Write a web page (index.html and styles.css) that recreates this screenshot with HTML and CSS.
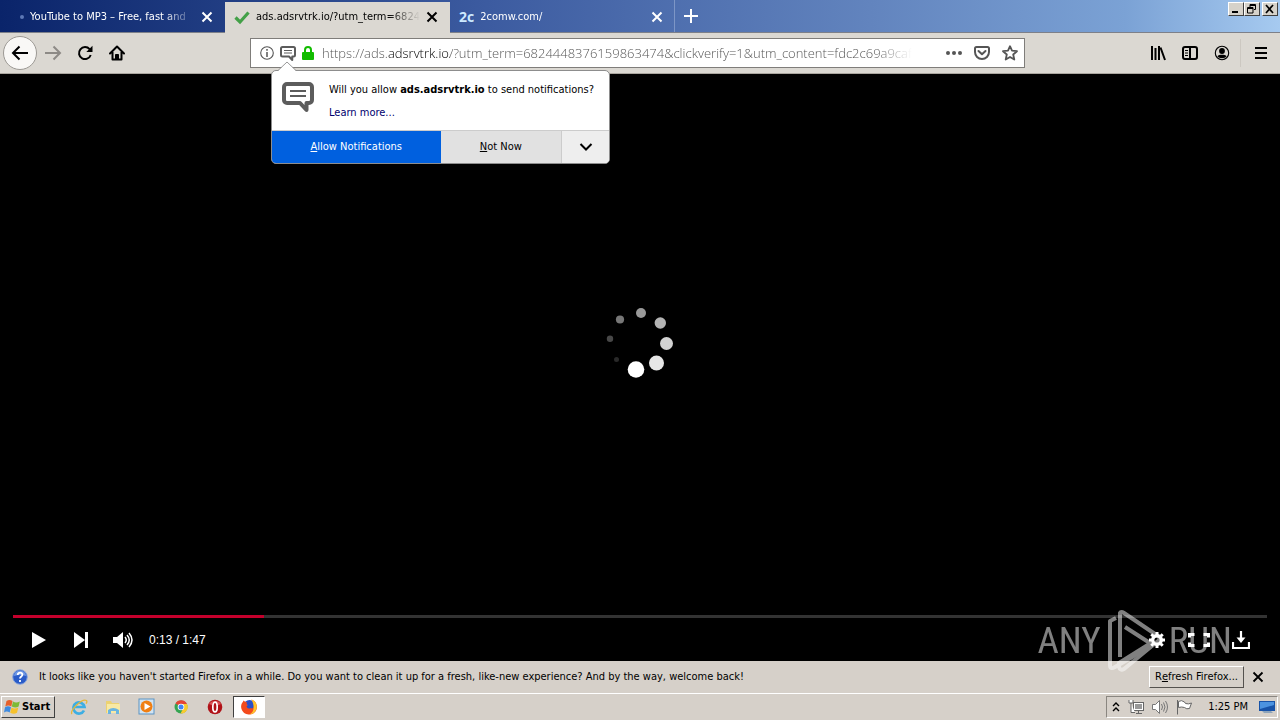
FILE: index.html
```html
<!DOCTYPE html>
<html lang="en">
<head>
<meta charset="utf-8">
<title>ads.adsrvtrk.io</title>
<link rel="stylesheet" href="styles.css">
</head>
<body>
<header class="titlebar">
  <nav class="tabs" aria-label="Tabs">
    <div class="tab tab-first">
      <span class="tab-dot"></span>
      <span class="tab-title">YouTube to MP3 – Free, fast and</span>
      <button class="tab-close" aria-label="Close tab"><svg width="12" height="12" viewBox="0 0 12 12"><path d="M1.500 1.500 10.500 10.500M10.500 1.500 1.500 10.500"/></svg></button>
    </div>
    <div class="tab tab-active">
      <svg class="favicon" width="16" height="16" viewBox="0 0 16 16"><path d="M1.500 8.500 6 13 14.500 3.500" fill="none" stroke="#43a047" stroke-width="3.200"/></svg>
      <span class="tab-title">ads.adsrvtrk.io/?utm_term=6824</span>
      <button class="tab-close" aria-label="Close tab"><svg width="12" height="12" viewBox="0 0 12 12"><path d="M1.500 1.500 10.500 10.500M10.500 1.500 1.500 10.500"/></svg></button>
    </div>
    <div class="tab tab-last">
      <span class="favicon-text">2c</span>
      <span class="tab-title">2comw.com/</span>
      <button class="tab-close" aria-label="Close tab"><svg width="12" height="12" viewBox="0 0 12 12"><path d="M1.500 1.500 10.500 10.500M10.500 1.500 1.500 10.500"/></svg></button>
    </div>
    <button class="new-tab" aria-label="New tab"><svg width="16" height="16" viewBox="0 0 16 16"><path d="M8 1v14M1 8h14" stroke="#fff" stroke-width="2"/></svg></button>
  </nav>
  <div class="window-buttons">
    <button class="win-btn" aria-label="Minimize"><svg width="12" height="10" viewBox="0 0 12 10"><path d="M2 8h6" stroke="#000" stroke-width="2"/></svg></button>
    <button class="win-btn" aria-label="Restore"><svg width="12" height="10" viewBox="0 0 12 10" fill="none" stroke="#000"><path d="M4 3V.5h5.500v5H8M4 1.500h5.500M1.500 3.500h5.500v5.500H1.500zM1.500 4.500h5.500"/></svg></button>
    <button class="win-btn win-close" aria-label="Close"><svg width="12" height="10" viewBox="0 0 12 10"><path d="M2 1l7 8M9 1 2 9" stroke="#000" stroke-width="1.700"/></svg></button>
  </div>
</header>

<div class="toolbar">
  <div class="nav-buttons">
    <button class="nav-btn nav-back" aria-label="Back"><svg width="18" height="16" viewBox="0 0 18 16"><path d="M17 8H2M8.500 1.500 2 8l6.500 6.500"/></svg></button>
    <button class="nav-btn nav-forward" aria-label="Forward"><svg width="18" height="16" viewBox="0 0 18 16"><path d="M1 8h15M9.500 1.500 16 8l-6.500 6.500"/></svg></button>
    <button class="nav-btn" aria-label="Reload"><svg width="16" height="16" viewBox="0 0 16 16"><path d="M12.600 4.200A6 6 0 1 0 13.700 10"/><path d="M15.500.800V7H9.300z" fill="#000" stroke="none"/></svg></button>
    <button class="nav-btn" aria-label="Home"><svg width="16" height="16" viewBox="0 0 16 16"><path d="M1 8.500 8 1.500l7 7M3.500 7v7.500h9V7" stroke-linejoin="round" stroke-linecap="round"/><path d="M6.500 15V9.500h3V15" fill="#000" stroke-width="1"/></svg></button>
  </div>
  <div class="urlbar">
    <div class="identity">
      <svg width="14" height="14" viewBox="0 0 14 14" fill="none" stroke="#555"><circle cx="7" cy="7" r="6.300" stroke-width="1.100"/><path d="M7 6v5M7 3v1.700" stroke-width="1.500"/></svg>
      <svg width="16" height="15" viewBox="0 0 32 30"><use href="#bubble"/></svg>
      <svg width="12" height="14" viewBox="0 0 12 14"><path d="M3 7V4a3 3 0 0 1 6 0v3" fill="none" stroke="#12bc00" stroke-width="2"/><rect y="6" width="12" height="8" rx="1" fill="#12bc00"/></svg>
    </div>
    <input class="url" type="text" aria-label="Address" value="https://ads.adsrvtrk.io/?utm_term=6824448376159863474&amp;clickverify=1&amp;utm_content=fdc2c69a9cafa">
    <div class="page-actions">
      <button class="icon-btn" aria-label="Page actions"><svg width="16" height="16" viewBox="0 0 16 16" fill="#555"><circle cx="2" cy="8" r="2"/><circle cx="8" cy="8" r="2"/><circle cx="14" cy="8" r="2"/></svg></button>
      <button class="icon-btn" aria-label="Save to Pocket"><svg width="16" height="16" viewBox="0 0 16 16" fill="none" stroke="#555" stroke-width="2"><path d="M2.500 2h11A1.500 1.500 0 0 1 15 3.500V7A7 7 0 0 1 1 7V3.500A1.500 1.500 0 0 1 2.500 2z"/><path d="M4.500 6 8 9.300 11.500 6" stroke-linecap="round" stroke-linejoin="round"/></svg></button>
      <button class="icon-btn" aria-label="Bookmark"><svg width="16" height="16" viewBox="0 0 16 16" fill="none" stroke="#555" stroke-width="1.800" stroke-linejoin="round"><path d="M8 1.200l2 4.500 5 .5-3.800 3.300 1.100 5L8 11.900l-4.300 2.600 1.100-5L1 6.200l5-.5z"/></svg></button>
    </div>
    <section class="popup" aria-label="Notification permission">
      <svg class="popup-arrow" width="18" height="10" viewBox="0 0 18 10"><path d="M0 10 9 1l9 9z" fill="#fff"/><path d="M0 9.500 9 1l9 8.500" fill="none" stroke="#999"/></svg>
      <div class="popup-body">
        <svg class="popup-icon" width="32" height="30" viewBox="0 0 32 30"><g id="bubble"><path d="M5 2h22a3 3 0 0 1 3 3v13a3 3 0 0 1-3 3h-2.500v7L18 21H5a3 3 0 0 1-3-3V5a3 3 0 0 1 3-3z" fill="#fff" stroke="#5c5c5c" stroke-width="4" stroke-linejoin="round"/><path d="M8 9h16M8 14h16" stroke="#5c5c5c" stroke-width="2"/></g></svg>
        <div class="popup-text">
          <p>Will you allow <b>ads.adsrvtrk.io</b> to send notifications?</p>
          <a href="#">Learn more...</a>
        </div>
      </div>
      <div class="popup-actions">
        <button class="allow"><u>A</u>llow Notifications</button>
        <button class="not-now"><u>N</u>ot Now</button>
        <button class="more" aria-label="More options"><svg width="14" height="10" viewBox="0 0 14 10"><path d="M1.500 2 7 7.500 12.500 2" fill="none" stroke="#000" stroke-width="2"/></svg></button>
      </div>
    </section>
  </div>
  <div class="tool-buttons">
    <button class="icon-btn" aria-label="Library"><svg width="16" height="16" viewBox="0 0 16 16" stroke="#000" stroke-width="2"><path d="M2 1v14M5.500 3v12M9 1v14M10.500 2.500 15 15"/></svg></button>
    <button class="icon-btn" aria-label="Sidebars"><svg width="16" height="16" viewBox="0 0 16 16" fill="none" stroke="#000" stroke-width="2"><rect x="1" y="2" width="14" height="12" rx="2"/><path d="M8 2v12"/><path d="M3 5.500h3M3 8h3M3 10.500h3" stroke-width="1"/></svg></button>
    <button class="icon-btn" aria-label="Account"><svg width="16" height="16" viewBox="0 0 16 16"><circle cx="8" cy="8" r="6.700" fill="none" stroke="#000" stroke-width="1.100"/><circle cx="8" cy="6" r="2.900"/><path d="M3.400 11.200C5 9.300 11 9.300 12.600 11.200 11 13.800 5 13.800 3.400 11.200z"/></svg></button>
    <button class="icon-btn menu-btn" aria-label="Menu"><svg width="14" height="14" viewBox="0 0 14 14" stroke="#000" stroke-width="2"><path d="M1 2h12M1 7h12M1 12h12"/></svg></button>
  </div>
</div>

<main class="player">
  <div class="stage">
    <svg width="80" height="81" viewBox="600 304 80 81" role="img" aria-label="Loading">
      <circle cx="636" cy="369.500" r="8.300" fill="#fff"/><circle cx="656.500" cy="363" r="7.500" fill="#e6e6e6"/><circle cx="666.500" cy="343.500" r="6.500" fill="#d2d2d2"/><circle cx="660.300" cy="323" r="5.700" fill="#b4b4b4"/><circle cx="641" cy="313" r="5" fill="#999"/><circle cx="620" cy="319.500" r="4.100" fill="#777"/><circle cx="610" cy="338.700" r="3.200" fill="#484848"/><circle cx="616.500" cy="359.500" r="2.500" fill="#292929"/>
    </svg>
  </div>
  <div class="controls">
    <div class="progress"><div class="progress-done" style="width:20%"></div></div>
    <div class="control-row">
      <button class="icon-btn" aria-label="Play"><svg width="16" height="16" viewBox="0 0 16 16"><path d="M1 0 15 8 1 16z" fill="#fff"/></svg></button>
      <button class="icon-btn" aria-label="Next"><svg width="16" height="16" viewBox="0 0 16 16"><path d="M1 0 12 8 1 16zM12 0h3v16h-3z" fill="#fff"/></svg></button>
      <button class="icon-btn" aria-label="Mute"><svg width="20" height="16" viewBox="0 0 20 16"><path d="M0 5h4l6-5v16l-6-5H0z" fill="#fff"/><path d="M12 5q2.500 3 0 6M14 3q4.500 5 0 10M16 1q6 7 0 14" fill="none" stroke="#fff" stroke-width="1.500"/></svg></button>
      <span class="time">0:13 / 1:47</span>
      <button class="icon-btn settings" aria-label="Settings"><svg width="16" height="16" viewBox="0 0 16 16"><circle cx="8" cy="8" r="4.300" fill="none" stroke="#fff" stroke-width="3.400"/><path d="M8 0v3M8 13v3M0 8h3M13 8h3M2.300 2.300l2 2M11.700 11.700l2 2M13.700 2.300l-2 2M4.300 11.700l-2 2" stroke="#fff" stroke-width="3"/></svg></button>
      <button class="icon-btn" aria-label="Full screen"><svg width="22" height="16" viewBox="0 0 22 16" fill="none" stroke="#fff" stroke-width="3"><path d="M1.500 5.500v-3h5M15.500 2.500h5v3M20.500 10.500v3h-5M6.500 13.500h-5v-3"/></svg></button>
      <button class="icon-btn" aria-label="Download"><svg width="18" height="18" viewBox="0 0 18 18"><path d="M9 0v9M1 11v6h16v-6" fill="none" stroke="#fff" stroke-width="2.200"/><path d="M4.500 6.500h9L9 12z" fill="#fff"/></svg></button>
    </div>
  </div>
  <div class="watermark">
    <span>ANY</span>
    <svg width="56" height="64" viewBox="0 0 56 64" fill="none" stroke="#fff" stroke-width="4" stroke-linejoin="round"><path d="M9 9 3 12v44q0 5 5 2l38-22"/><path d="M13 48V4q1-2 4 0l34 23q3 3 0 5L17 60q-4 2-5-2v-4l32-20M18 18l28 18"/></svg>
    <span>RUN</span>
  </div>
</main>

<aside class="notice">
  <svg width="16" height="16" viewBox="0 0 16 16"><circle cx="8" cy="8" r="7.300" fill="#2a5bc8" stroke="#8ba7dc"/><path d="M2 7a6 5.500 0 0 1 12 0q-6-2-12 0z" fill="#6f98e4"/><path d="M5.700 6.100c0-3.300 5-3.100 4.700-.2C10.200 7.500 8 7.500 8 9.500M8 11v2" fill="none" stroke="#fff" stroke-width="1.800"/></svg>
  <p class="notice-text">It looks like you haven't started Firefox in a while. Do you want to clean it up for a fresh, like-new experience? And by the way, welcome back!</p>
  <button class="refresh">R<u>e</u>fresh Firefox...</button>
  <button class="icon-btn" aria-label="Close notice"><svg width="12" height="12" viewBox="0 0 12 12"><path d="M1.500 1.500l9 9M10.500 1.500l-9 9" stroke="#000" stroke-width="1.800"/></svg></button>
</aside>

<footer class="taskbar">
  <button class="start"><svg width="16" height="16" viewBox="0 0 16 16"><path d="M2.500 2q3-2 6 0L7.300 7.500q-3-1.800-6 0z" fill="#e7602a"/><path d="M9 2.500q3 2 6.800 0l-1.200 5q-3 2-6.800 0z" fill="#7dba35"/><path d="M1 8.200q3-2 6 0L5.700 13.500q-3-1.800-5.700 0z" fill="#3f8be0"/><path d="M7.500 8.500q3 2 6.800 0L13 13.800q-3 2-6.800 0z" fill="#f6c12c"/></svg>Start</button>
  <div class="launchers">
    <button class="launch" aria-label="Internet Explorer"><svg width="18" height="18" viewBox="0 0 18 18" fill="none"><path d="M14 12.500a5.600 5.600 0 1 1 .5-3.500H5" stroke="#3daee3" stroke-width="2.700"/><path d="M2 16C-1 13 12 0 16.500 2.500c.8.800.3 2-.5 3.200" stroke="#e5b73a" stroke-width="1.300"/></svg></button>
    <button class="launch" aria-label="Explorer"><svg width="18" height="18" viewBox="0 0 18 18"><path d="M2 3h5l1 2h7v10H2z" fill="#ecd272"/><path d="M3 6h13v9H3z" fill="#f8e9a4"/><path d="M4 16v-4q5-4 11 0v4h-3v-3H7v3z" fill="#6bb5e0"/></svg></button>
    <button class="launch" aria-label="Media Player"><svg width="18" height="18" viewBox="0 0 18 18"><rect x="1" y="1" width="15" height="15" fill="#d2e4f2" stroke="#5a93c4"/><circle cx="8.500" cy="8.500" r="6" fill="#f07f13"/><path d="M6.500 5v7l6-3.500z" fill="#fff"/></svg></button>
    <button class="launch" aria-label="Chrome"><svg width="18" height="18" viewBox="0 0 18 18"><circle cx="9" cy="9" r="6.500" fill="#35a451"/><path d="M9 9 3.500 5.500A6.500 6.500 0 0 1 15 6H9z" fill="#e64435"/><path d="M15 6A6.500 6.500 0 0 1 8.500 15.500L12 9 9 6z" fill="#f9cb2e"/><circle cx="9" cy="9" r="3.300" fill="#fff"/><circle cx="9" cy="9" r="2.500" fill="#4285f4"/></svg></button>
    <button class="launch" aria-label="Opera"><svg width="18" height="18" viewBox="0 0 18 18"><circle cx="9" cy="9" r="7.300" fill="#b01218"/><path d="M3 6a6.500 5 0 0 1 12 0q-6 3-12 0z" fill="#da5256"/><ellipse cx="9" cy="9" rx="2.200" ry="4.900" fill="#b01218" stroke="#fff" stroke-width="1.700"/></svg></button>
    <button class="launch launch-active" aria-label="Firefox"><svg width="18" height="18" viewBox="0 0 18 18"><circle cx="9.500" cy="8" r="6" fill="#2a50c8"/><path d="M2 5q1-1 1.500-2.500Q5 4 7 4.300 6 6 7.800 7L6.500 8.500q1 3 4.500 1.500 1 0 1 .8c3-2 2-6-.5-9.300C16 3 18 8 16.300 12A8 8 0 0 1 1.500 11Q.5 8 2 5z" fill="#f34a1d"/><path d="M11.500 1.500C16 3 18 8 16 12q-2 4-6.500 4.500c4-2 6-7 2-15z" fill="#ffc62b"/></svg></button>
  </div>
  <div class="tray">
    <svg width="8" height="12" viewBox="0 0 8 12" fill="none" stroke="#000" stroke-width="1.400"><path d="M1 5l3-3 3 3M1 10l3-3 3 3"/></svg>
    <svg width="16" height="16" viewBox="0 0 16 16" fill="#fff" stroke="#666"><rect x="5.500" y="3.500" width="10" height="8"/><path d="M7 5h7v5H7z" fill="#999" stroke="none"/><path d="M8 14.500h6M10.500 12v2M1 1v3h4V1M3 4v9.500h4"/></svg>
    <svg width="16" height="16" viewBox="0 0 16 16" fill="#fff" stroke="#777"><path d="M.500 5.500h3l4-4v13l-4-4h-3z"/><path d="M9.500 5q2 3 0 6M11.500 3.500q3 4.500 0 9M13.500 2q4 6 0 12" fill="none"/></svg>
    <svg width="16" height="16" viewBox="0 0 16 16" fill="#fff" stroke="#666"><path d="M2.500 2.500q3-2 6 .5l1 1.500q3 1 6-.5l-2 5.500q-3 1-5-1-3-1-6 0zM1.500 1v14.500"/></svg>
    <span class="clock">1:25 PM</span>
    <svg width="16" height="14" viewBox="0 0 16 14"><path d="M0 1h16v10H0z" fill="#1853a8"/><path d="M1 2h14v3L1 9z" fill="#4c93e0"/><path d="M3 11h9l2 2H5z" fill="#8ea4ba"/></svg>
  </div>
</footer>
</body>
</html>
```
FILE: styles.css
```css
* { box-sizing: border-box; }

body {
  margin: 0;
  min-height: 100vh;
  display: flex;
  flex-direction: column;
  background: #000;
  color: #000;
  font: 11px/16px Tahoma, "DejaVu Sans Condensed", "Noto Sans", sans-serif;
}

button {
  display: flex;
  align-items: center;
  justify-content: center;
  border: 0;
  padding: 0;
  background: none;
  color: inherit;
  font: inherit;
}

p { margin: 0; }
svg { flex: none; }

/* Title bar */
.titlebar {
  display: flex;
  justify-content: space-between;
  height: 33px;
  border-bottom: 1px solid #7d8089;
  background: linear-gradient(to right, #0a246a, #3c5ba0 38%, #6284be 68%, #7ba2d5 88%, #a6caf0);
}
.tabs { display: flex; flex: 1; min-width: 0; }
.tab {
  display: flex;
  align-items: center;
  gap: 6px;
  flex: 0 1 225px;
  min-width: 0;
  padding: 2px 12px 0 9px;
  color: #fff;
  stroke: #fff;
}
.tab-first { padding-left: 20px; }
.tab-dot { width: 4px; height: 4px; border-radius: 50%; background: #5d78b5; }
.tab-active {
  height: 33px;
  margin-top: 2px;
  padding-top: 0;
  padding-bottom: 3px;
  background: #dbd8d2;
  color: #000;
  stroke: #000;
}
.tab-last { padding-right: 11px; border-right: 1px solid #7d96c6; }
.tab-title {
  flex: 1;
  overflow: hidden;
  white-space: nowrap;
  mask-image: linear-gradient(to left, transparent, #000 32px);
}
.tab-close { width: 12px; height: 16px; stroke: inherit; stroke-width: 2px; }
.favicon-text { font: bold 14px/16px "Open Sans", sans-serif; color: #cdeaff; }
.new-tab { width: 32px; }
.window-buttons { display: flex; padding: 2px 2px 0 0; }
.win-btn {
  width: 16px;
  height: 14px;
  background: #d6d2ca;
  border: 1px solid;
  border-color: #fff #404040 #404040 #fff;
}
.win-close { margin-left: 2px; }

/* Navigation toolbar */
.toolbar {
  display: grid;
  grid-template-columns: 250fr 775fr 255fr;
  align-items: center;
  height: 41px;
  border-bottom: 1px solid #aaa69f;
  background: #dbd8d2;
}
.nav-buttons { display: flex; align-items: center; padding-left: 3px; }
.nav-btn { width: 32px; height: 32px; }
.nav-btn svg { fill: none; stroke: #000; stroke-width: 2px; }
.nav-back {
  width: 34px;
  height: 34px;
  border: 1px solid #9c9994;
  border-radius: 50%;
  background: #f9f8f6;
}
.nav-btn.nav-forward svg { stroke: #8d8a86; }
.urlbar {
  position: relative;
  display: flex;
  align-items: center;
  height: 30px;
  border: 1px solid #7f7d7a;
  background: #fff;
}
.identity { display: flex; align-items: center; gap: 6px; padding: 0 5px 0 9px; }
.url {
  flex: 1;
  min-width: 0;
  height: 26px;
  border: 0;
  outline: 0;
  padding: 0 0 0 3px;
  background: linear-gradient(to right, #505050 69px, #000 69px, #000 131px, #505050 131px, #505050 calc(100% - 36px), transparent);
  -webkit-background-clip: text;
  background-clip: text;
  color: transparent;
  font: 300 13px/20px "Open Sans", "Noto Sans", sans-serif;
}
.page-actions { display: flex; padding: 0 0 0 28px; }
.icon-btn { width: 28px; height: 28px; }
.tool-buttons { display: flex; justify-content: flex-end; gap: 4px; padding-right: 4px; }
.menu-btn { width: 36px; padding-left: 4px; border-left: 1px solid #ccc8c1; }

/* Permission popup, hanging from the address bar */
.popup {
  position: absolute;
  z-index: 2;
  top: 31px;
  left: 20px;
  width: 339px;
  border: 1px solid #8d8d8d;
  border-radius: 5px;
  background: #fff;
}
.popup-arrow { position: absolute; top: -10px; left: 6px; }
.popup-body { display: flex; gap: 15px; padding: 11px 10px 10px; height: 59px; }
.popup-text { display: grid; align-content: start; gap: 7px; white-space: nowrap; }
.popup-text a { color: #00006e; text-decoration: none; }
.popup-actions { display: flex; height: 33px; border-top: 1px solid #ccc; }
.allow { flex: 169; border-radius: 0 0 0 4px; background: #0060df; color: #fff; }
.not-now { flex: 121; background: #e1e1e1; }
.more { flex: 47; border-left: 1px solid #ccc; border-radius: 0 0 4px; background: #eee; }

/* Video player */
.player { position: relative; display: flex; flex: 1; flex-direction: column; }
.stage { display: flex; flex: 1; align-items: center; justify-content: center; }
.progress { height: 3px; margin: 0 13px; background: #333; }
.progress-done { height: 3px; background: #c4002c; }
.control-row {
  display: flex;
  align-items: center;
  gap: 14px;
  height: 43px;
  padding: 0 25px;
}
.time { color: #fff; font: 12px/16px "Liberation Sans", Arial, sans-serif; margin-left: -2px; }
.settings { margin-left: auto; }
.watermark {
  position: absolute;
  right: 48px;
  bottom: -12px;
  display: flex;
  align-items: center;
  gap: 6px;
  color: #fff;
  font: 37px/40px "Roboto Condensed", "Liberation Sans Narrow", "Liberation Sans", sans-serif;
  opacity: 0.5;
  pointer-events: none;
}

/* Notice bar */
.notice {
  display: flex;
  align-items: center;
  height: 32px;
  padding: 0 8px 0 12px;
  background: #d6d0c9;
}
.notice-text { flex: 1; padding-left: 11px; }
.refresh {
  height: 22px;
  padding: 0 5px;
  border: 1px solid;
  border-color: #fff #55524e #55524e #fff;
}

/* Taskbar */
.taskbar {
  display: flex;
  align-items: center;
  height: 27px;
  padding: 0 2px 0 1px;
  border-top: 1px solid #fff;
  background: #d6d0c9;
}
.start {
  gap: 2px;
  height: 22px;
  padding: 0 4px 0 2px;
  border: 1px solid;
  border-color: #fff #404040 #404040 #fff;
  font-weight: bold;
}
.launchers { display: flex; flex: 1; gap: 2px; padding-left: 8px; }
.launch { width: 32px; height: 22px; }
.launch-active {
  border: 1px solid;
  border-color: #404040 #fff #fff #404040;
  background: #fff;
}
.tray {
  display: flex;
  align-items: center;
  gap: 8px;
  height: 22px;
  padding: 0 2px 0 5px;
  border: 1px solid;
  border-color: #8a8680 #fff #fff #8a8680;
}
.clock { padding: 0 3px 0 8px; }
```
